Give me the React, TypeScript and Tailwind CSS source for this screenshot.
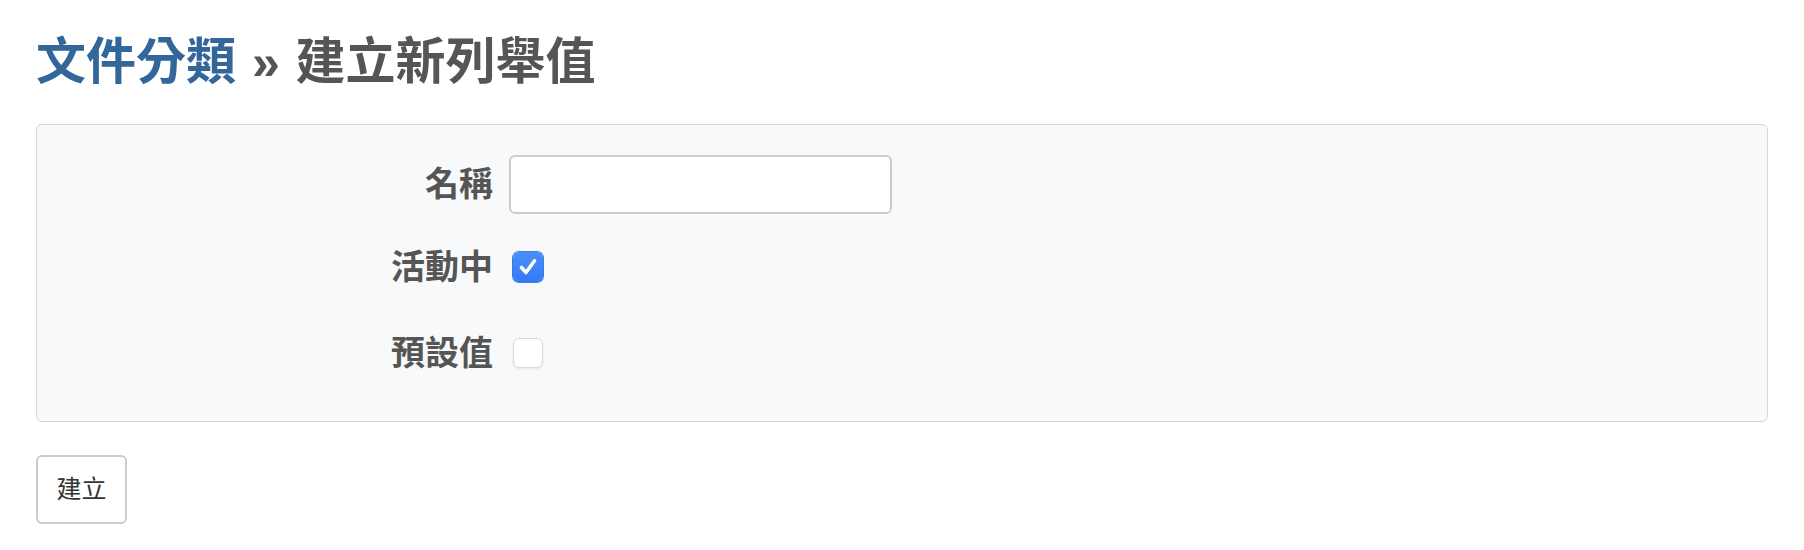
import React from "react";

const font = { fontFamily: '"Liberation Sans", "Noto Sans CJK TC", sans-serif' };

function CheckedBox() {
  return (
    <div className="ml-[4px] flex h-[30px] w-[30px] items-center justify-center rounded-[6px] bg-gradient-to-b from-[#4b8ff8] to-[#3478f6] shadow-[0_0_0_1px_#3a7be8]">
      <svg width="30" height="30" viewBox="0 0 30 30" fill="none">
        <path d="M8.5 15.5 L13 20.5 L21.5 8.8" stroke="white" strokeWidth="3.6" strokeLinecap="round" strokeLinejoin="round" />
      </svg>
    </div>
  );
}

function EmptyBox() {
  return (
    <div className="ml-[4px] h-[30px] w-[30px] rounded-[6px] border-[1.5px] border-[#d9d9d9] bg-white shadow-[0_1px_2px_rgba(0,0,0,0.08)]" />
  );
}

export default function App() {
  return (
    <div className="min-h-[550px] bg-white px-[36px] pt-[35px]" style={font}>
      <h1 className="text-[50px] font-bold leading-[55px] text-[#555555]">
        <span className="text-[#336699]">文件分類</span>
        <span className="mx-[2px]"> » </span>建立新列舉值
      </h1>
      <div className="mt-[34px] h-[298px] rounded-[6px] border-[1.5px] border-[#d3d7dc] bg-[#f8f9fa] pt-[30px]">
        <div className="flex h-[59px] items-center">
          <div className="w-[456px] text-right text-[34px] font-bold text-[#555555]">名稱</div>
          <input className="ml-[16px] h-[59px] w-[383px] rounded-[6px] border-2 border-[#cccccc] bg-white outline-none" />
        </div>
        <div className="mt-[23px] flex h-[60px] items-center">
          <div className="w-[456px] text-right text-[34px] font-bold text-[#555555]">活動中</div>
          <div className="ml-[16px]"><CheckedBox /></div>
        </div>
        <div className="mt-[26px] flex h-[60px] items-center">
          <div className="w-[456px] text-right text-[34px] font-bold text-[#555555]">預設值</div>
          <div className="ml-[16px]"><EmptyBox /></div>
        </div>
      </div>
      <button className="mt-[33px] flex h-[69px] w-[91px] items-center justify-center rounded-[6px] border-2 border-[#cccccc] bg-white text-[25px] text-[#333333]">
        建立
      </button>
    </div>
  );
}
